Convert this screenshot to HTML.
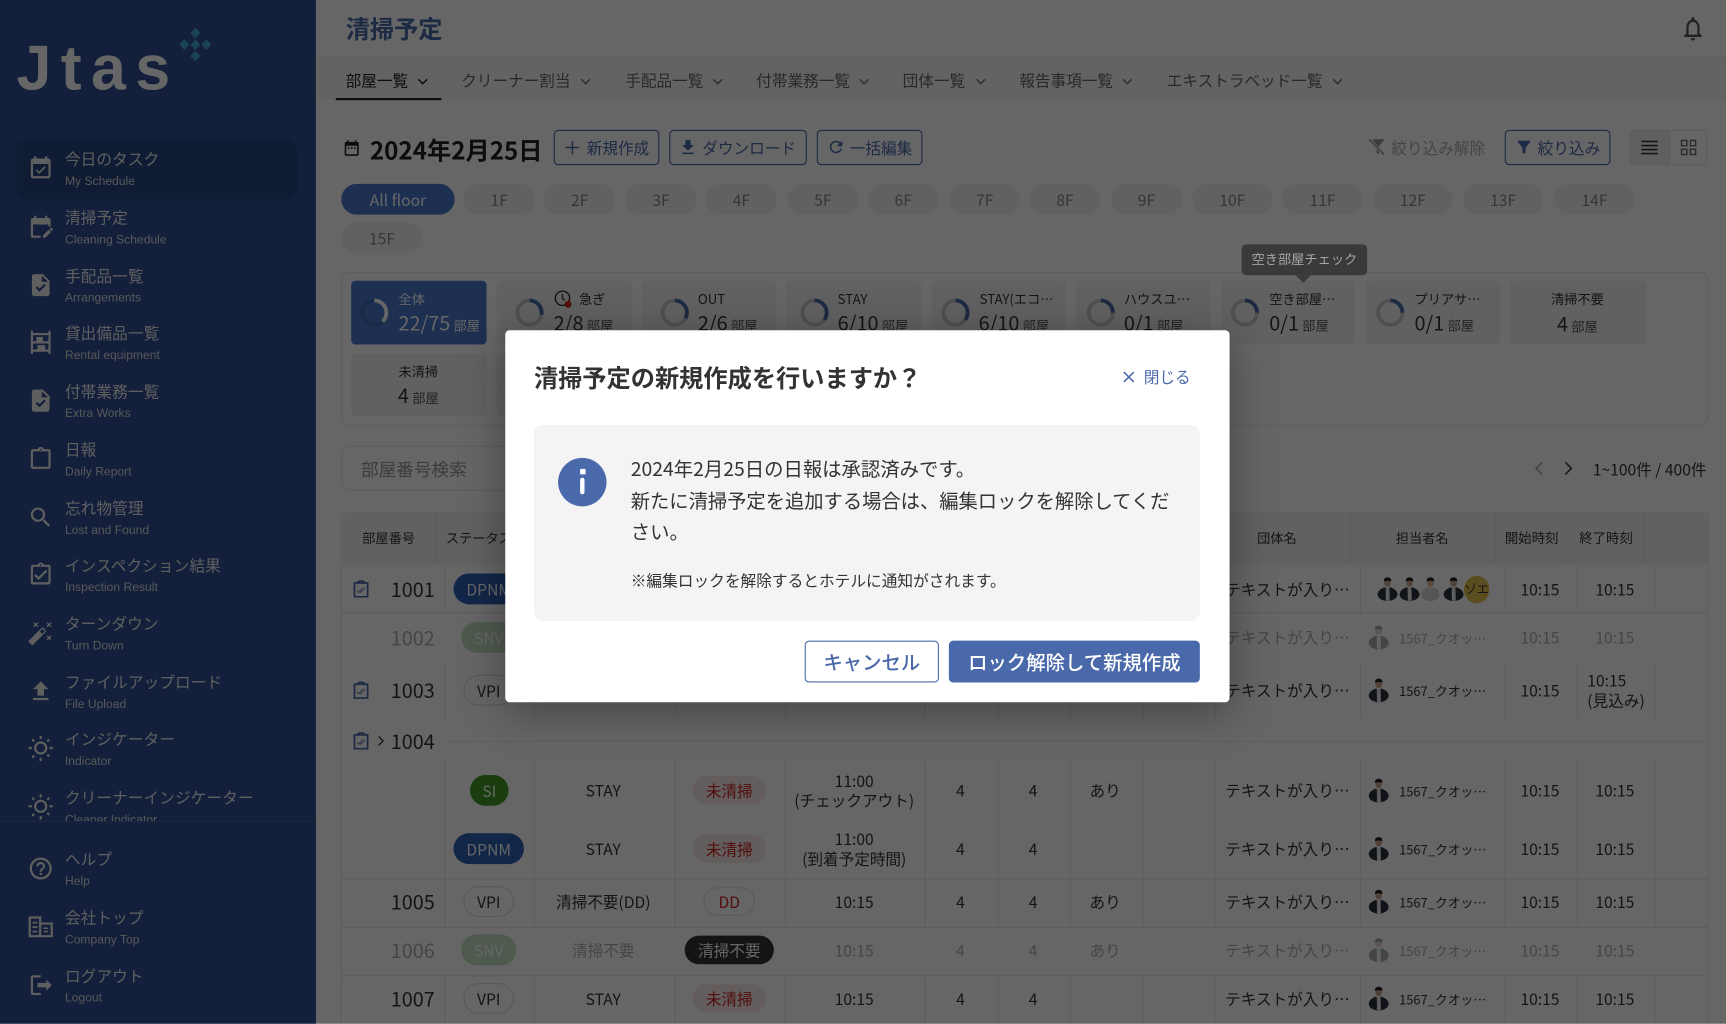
<!DOCTYPE html>
<html lang="ja"><head><meta charset="utf-8"><title>清掃予定</title>
<style>
html,body{margin:0;padding:0;width:1726px;height:1024px;overflow:hidden;background:#fff}
#s{position:absolute;left:0;top:0;width:1568px;height:930.3px;transform:scale(1.10077);transform-origin:0 0;overflow:hidden;background:#fff;font-family:"Noto Sans CJK JP","Liberation Sans",sans-serif;color:#333;font-size:14.2px}
.t{position:absolute;transform:translateY(calc(-50% + 1px));white-space:nowrap;line-height:1.3}
.c{position:absolute;transform:translate(-50%,calc(-50% + 1px));white-space:nowrap;line-height:1.3}
.b{position:absolute;box-sizing:border-box}
svg{position:absolute;display:block;overflow:visible}
.i{fill:currentColor}
#side{position:absolute;left:0;top:0;width:287px;height:930.3px;background:#304e94;color:#eee;overflow:hidden}
.m{position:absolute;left:0;width:287px;height:40px}
.m svg{left:25px;top:6px;width:24px;height:24px}
.m b{position:absolute;left:59px;top:0;font-weight:400;font-size:14.2px;line-height:20px;white-space:nowrap;letter-spacing:.1px}
.m i{position:absolute;left:59px;top:23px;font-style:normal;font-size:11px;line-height:14px;font-family:"Liberation Sans",sans-serif;white-space:nowrap;color:#ddd}
.tab{position:absolute;top:74px;transform:translateY(-50%);font-size:14.2px;line-height:1.3;color:#666;white-space:nowrap}
.ch{width:10px;height:6px;fill:none;stroke:#777;stroke-width:1.4;top:70.5px}
.btn{position:absolute;top:118px;height:32px;box-sizing:border-box;border:1px solid #4a69ab;border-radius:4px;background:#fff;color:#4a69ab}
.pill{position:absolute;height:28px;top:167px;border-radius:14px;background:#f2f2f2;color:#888;text-align:center;line-height:30px;font-size:14.2px;box-sizing:border-box}
.card{position:absolute;height:58px;width:123px;top:255px;border-radius:4px;background:#f3f3f3}
.lab{position:absolute;top:272px;transform:translateY(-50%);font-size:12px;white-space:nowrap;line-height:1.3;color:#333}
.val{position:absolute;top:294px;transform:translateY(-50%);font-size:18px;white-space:nowrap;line-height:1.3;color:#333}
.val small{font-size:12px;margin-left:3px;color:#555}
.ring{width:26px;height:26px;top:271px}
.r{position:absolute;left:0;width:1568px;height:0}
.r>.t,.r>.c{top:0}
.no{position:absolute;left:355px;top:0;transform:translateY(calc(-50% + 1px));font-size:18px;line-height:1.3}
.st{position:absolute;top:-14px;height:28px;border-radius:14px;text-align:center;line-height:30px;font-size:14.2px;box-sizing:border-box}
.dp{left:412px;width:64px;background:#2f5fb5;color:#fff}
.vp{left:421px;width:46px;border:1px solid #ddd;background:#fff;line-height:28px;color:#333}
.sv{left:419px;width:50px;background:#6fb269;color:#fff}
.cl{position:absolute;top:-13px;height:26px;border-radius:13px;text-align:center;line-height:28px;font-size:14.2px;box-sizing:border-box}
.un{left:629px;width:67px;background:#fbe9e9;color:#c8211c}
.gr{position:absolute;left:1113px;top:0;transform:translateY(calc(-50% + 1px));white-space:nowrap;font-size:14.2px;line-height:1.3}
.nm{position:absolute;left:1271px;top:0;transform:translateY(calc(-50% + 1px));white-space:nowrap;font-size:11.7px;line-height:1.3}
.av{left:1243px;top:-12px;width:19px;height:24px}
.ck{left:321px;top:-8px;width:14px;height:16px}
.dis{opacity:.4}
#ov{position:absolute;left:0;top:0;width:1568px;height:931px;background:rgba(0,0,0,.6)}
</style></head><body>
<div id="s">
<svg width="0" height="0" style="position:absolute"><defs>
<symbol id="person" viewBox="0 0 22 26"><ellipse cx="11" cy="6.500" rx="3.400" ry="4.400" fill="#c9a58c"/><path d="M11 .8c-3 0-4.200 2-3.800 4.600 1-1.300 6.600-1.300 7.600 0 .4-2.600-.8-4.600-3.800-4.600z" fill="#1b1b1b"/><path d="M.5 18.500c.5-4 4-6 7.500-7.300l3 1.800 3-1.800c3.500 1.300 7 3.300 7.500 7.300 0 4-4.500 7.200-10.500 7.200S.5 22.500.5 18.500z" fill="#28323f"/><path d="M9 12.200l2 .8 2-.8.3 13.300H9.200z" fill="#e9e9e9"/></symbol>
<symbol id="person2" viewBox="0 0 22 26"><ellipse cx="11" cy="6.500" rx="3.400" ry="4.400" fill="#d6b39a"/><path d="M11 .8c-3 0-4.200 2-3.800 4.600 1-1.300 6.600-1.300 7.600 0 .4-2.600-.8-4.600-3.800-4.600z" fill="#222"/><path d="M1.500 18.500c.5-4 3.500-6 6.500-7.300l3 1 3-1c3 1.300 6 3.300 6.500 7.300 0 4-3.500 7.200-9.500 7.200s-9.500-3.200-9.500-7.200z" fill="#d4d4d4"/></symbol>
<symbol id="clip" viewBox="0 0 16 18"><path d="M1.200 2.800h3.300c.2-1.200 1.700-2 3.500-2s3.300.8 3.500 2h3.300v14.400H1.200z" fill="none" stroke="#4a69ab" stroke-width="1.800"/><path d="M4.500 3.800h7v-1.700h-7z" fill="#4a69ab"/><path d="M3.800 10.500l1.600 2.300 4.500-5.300M7 11.800l1 1 4.200-5.300" fill="none" stroke="#4a69ab" stroke-width=".8"/></symbol>
<path id="vl" d="M404.500 0V1M485.500 0V1M613 0V1M713.500 0V1M840.500 0V1M907 0V1M972 0V1M1038.500 0V1M1104 0V1M1236 0V1M1367 0V1M1433 0V1M1503.500 0V1" fill="none" stroke="#ececec" stroke-width="1" vector-effect="non-scaling-stroke"/>
</defs></svg>

<!-- SIDEBAR -->
<div id="side">
<div class="t" style="left:15px;top:62px;font:700 57px/1 'Liberation Sans',sans-serif;letter-spacing:8.500px;color:#fff">Jtas</div>
<svg style="left:163px;top:25px;width:29px;height:31px" viewBox="0 0 29 31"><g fill="#45a9d6"><path d="M14.500 0l4.500 5-4.500 5-4.500-5zM4.500 10.500l4.500 5-4.500 5-4.500-5zM14.500 10.500l4.500 5-4.500 5-4.500-5zM24.500 10.500l4.500 5-4.500 5-4.500-5zM14.500 21l4.500 5-4.500 5-4.500-5z"/></g></svg>
<div class="b" style="left:15px;top:127px;width:255px;height:54px;border-radius:10px;background:#2a4483"></div>
<div class="m" style="top:135px"><svg viewBox="0 0 24 24" class="i"><path d="M16.530 11.060L15.470 10l-4.880 4.880-2.120-2.120-1.060 1.060L10.590 17l5.940-5.940zM19 3h-1V1h-2v2H8V1H6v2H5c-1.110 0-1.990.9-1.990 2L3 19c0 1.100.89 2 2 2h14c1.100 0 2-.9 2-2V5c0-1.100-.9-2-2-2zm0 16H5V8h14v11z"/></svg><b>今日のタスク</b><i>My Schedule</i></div>
<div class="m" style="top:188px"><svg viewBox="0 0 24 24" class="i"><path d="M5 10h14v2h2V6c0-1.100-.9-2-2-2h-1V2h-2v2H8V2H6v2H5c-1.110 0-1.990.9-1.990 2L3 20c0 1.100.89 2 2 2h7v-2H5V10zm17.840 5.280-.71.71-2.120-2.120.71-.71c.39-.39 1.020-.39 1.410 0l.71.71c.39.39.39 1.020 0 1.410zm-3.540-.7 2.120 2.120-5.300 5.300H14v-2.120l5.300-5.300z"/></svg><b>清掃予定</b><i>Cleaning Schedule</i></div>
<div class="m" style="top:241px"><svg viewBox="0 0 24 24" class="i"><path d="M14 2H6c-1.100 0-1.990.9-1.990 2L4 20c0 1.100.89 2 2 2h12c1.100 0 2-.9 2-2V8l-6-6zm-3.060 16L7.400 14.460l1.410-1.410 2.120 2.120 4.240-4.240 1.410 1.410L10.940 18zM13 9V3.500L18.500 9H13z"/></svg><b>手配品一覧</b><i>Arrangements</i></div>
<div class="m" style="top:293px"><svg viewBox="0 0 24 24" class="i"><path fill-rule="evenodd" d="M3 1.500h2v2h14v-2h2v21h-2v-2H5v2H3zM5 5.500v5.500h14V5.500zM5 13v5.500h14V13zM8 7h6v4H8zM9 14.500h7V18.500H9z"/></svg><b>貸出備品一覧</b><i>Rental equipment</i></div>
<div class="m" style="top:346px"><svg viewBox="0 0 24 24" class="i"><path d="M14 2H6c-1.100 0-1.990.9-1.990 2L4 20c0 1.100.89 2 2 2h12c1.100 0 2-.9 2-2V8l-6-6zm-3.060 16L7.400 14.460l1.410-1.410 2.120 2.120 4.240-4.240 1.410 1.410L10.940 18zM13 9V3.500L18.500 9H13z"/></svg><b>付帯業務一覧</b><i>Extra Works</i></div>
<div class="m" style="top:399px"><svg viewBox="0 0 24 24" class="i"><path d="M19 3h-4.180C14.400 1.840 13.300 1 12 1s-2.400.84-2.820 2H5c-1.100 0-2 .9-2 2v14c0 1.100.9 2 2 2h14c1.100 0 2-.9 2-2V5c0-1.100-.9-2-2-2zm-7-.25c.41 0 .75.34.75.75s-.34.75-.75.75-.75-.34-.75-.75.34-.75.75-.75zM19 19H5V5h14v14z"/></svg><b>日報</b><i>Daily Report</i></div>
<div class="m" style="top:452px"><svg viewBox="0 0 24 24" class="i"><path d="M15.500 14h-.79l-.28-.27C15.410 12.590 16 11.110 16 9.500 16 5.910 13.090 3 9.500 3S3 5.910 3 9.500 5.910 16 9.500 16c1.610 0 3.090-.59 4.230-1.570l.27.28v.79l5 4.990L20.490 19l-4.990-5zm-6 0C7.010 14 5 11.990 5 9.500S7.010 5 9.500 5 14 7.010 14 9.500 11.990 14 9.500 14z"/></svg><b>忘れ物管理</b><i>Lost and Found</i></div>
<div class="m" style="top:504px"><svg viewBox="0 0 24 24" class="i"><path d="M18 9l-1.410-1.420L10 14.170l-2.590-2.580L6 13l4 4zM19 3h-4.180C14.400 1.840 13.300 1 12 1s-2.400.84-2.820 2H5c-1.100 0-2 .9-2 2v14c0 1.100.9 2 2 2h14c1.100 0 2-.9 2-2V5c0-1.100-.9-2-2-2zm-7-.25c.41 0 .75.34.75.75s-.34.75-.75.75-.75-.34-.75-.75.34-.75.75-.75zM19 19H5V5h14v14z"/></svg><b>インスペクション結果</b><i>Inspection Result</i></div>
<div class="m" style="top:557px"><svg viewBox="0 0 24 24" class="i"><path d="M7.500 5.600 10 7 8.600 4.500 10 2 7.500 3.400 5 2l1.400 2.500L5 7zm12 9.800L17 14l1.400 2.500L17 19l2.500-1.400L22 19l-1.400-2.500L22 14zM22 2l-2.500 1.400L17 2l1.400 2.500L17 7l2.500-1.400L22 7l-1.400-2.500zm-7.630 5.290c-.39-.39-1.020-.39-1.410 0L1.290 18.960c-.39.39-.39 1.020 0 1.410l2.340 2.340c.39.39 1.020.39 1.410 0L16.700 11.050c.39-.39.39-1.020 0-1.410l-2.330-2.350zm-1.030 5.490-2.120-2.120 2.440-2.440 2.120 2.120-2.440 2.440z"/></svg><b>ターンダウン</b><i>Turn Down</i></div>
<div class="m" style="top:609.500px"><svg viewBox="0 0 24 24" class="i"><path d="M5 20h14v-2H5v2zm0-10h4v6h6v-6h4l-7-7-7 7z"/></svg><b>ファイルアップロード</b><i>File Upload</i></div>
<div class="m" style="top:662px"><svg viewBox="0 0 24 24" class="i"><path d="M6.760 4.840l-1.800-1.790-1.410 1.410 1.790 1.790 1.420-1.410zM4 10.500H1v2h3v-2zm9-9.950h-2V3.500h2V.55zm7.450 3.910l-1.410-1.410-1.790 1.790 1.410 1.410 1.790-1.790zm-3.210 13.700l1.790 1.800 1.410-1.410-1.800-1.790-1.400 1.400zM20 10.500v2h3v-2h-3zm-8-5c-3.310 0-6 2.690-6 6s2.690 6 6 6 6-2.690 6-6-2.690-6-6-6zm0 10c-2.210 0-4-1.790-4-4s1.790-4 4-4 4 1.790 4 4-1.790 4-4 4zm-1 4.950h2V23.500h-2v-3.050zm-7.450-.96l1.410 1.410 1.790-1.800-1.410-1.410-1.790 1.800z"/></svg><b>インジケーター</b><i>Indicator</i></div>
<div class="m" style="top:715px"><svg viewBox="0 0 24 24" class="i"><path d="M6.760 4.840l-1.800-1.790-1.410 1.410 1.790 1.790 1.420-1.410zM4 10.500H1v2h3v-2zm9-9.950h-2V3.500h2V.55zm7.450 3.910l-1.410-1.410-1.790 1.790 1.410 1.410 1.790-1.790zm-3.210 13.700l1.790 1.800 1.410-1.410-1.800-1.790-1.400 1.400zM20 10.500v2h3v-2h-3zm-8-5c-3.310 0-6 2.690-6 6s2.690 6 6 6 6-2.690 6-6-2.690-6-6-6zm0 10c-2.210 0-4-1.790-4-4s1.790-4 4-4 4 1.790 4 4-1.790 4-4 4zm-1 4.950h2V23.500h-2v-3.050zm-7.450-.96l1.410 1.410 1.790-1.800-1.410-1.410-1.790 1.800z"/></svg><b>クリーナーインジケーター</b><i>Cleaner Indicator</i></div>
<div class="b" style="left:0;top:746px;width:287px;height:185px;background:#304e94;border-top:1px solid #45639f"></div>
<div class="m" style="top:771px"><svg viewBox="0 0 24 24" class="i"><path d="M11 18h2v-2h-2v2zm1-16C6.480 2 2 6.480 2 12s4.480 10 10 10 10-4.480 10-10S17.520 2 12 2zm0 18c-4.410 0-8-3.590-8-8s3.590-8 8-8 8 3.590 8 8-3.590 8-8 8zm0-14c-2.210 0-4 1.790-4 4h2c0-1.100.9-2 2-2s2 .9 2 2c0 2-3 1.750-3 5h2c0-2.250 3-2.500 3-5 0-2.210-1.790-4-4-4z"/></svg><b>ヘルプ</b><i>Help</i></div>
<div class="m" style="top:824px"><svg viewBox="0 0 24 24" class="i"><path fill-rule="evenodd" d="M1 2.500h11.500v19H1zM3 4.500v15h7.500v-15zM12.500 8H23v13.500H12.500v-2H21V10h-8.500zM4.500 7.500h4.500V9H4.500zM4.500 11.500h4.500V13H4.500zM4.500 15.500h4.500V17H4.500zM14.500 12.500h4V14h-4zM14.500 15.500h4V17h-4z"/></svg><b>会社トップ</b><i>Company Top</i></div>
<div class="m" style="top:877px"><svg viewBox="0 0 24 24" class="i"><path d="M5 5h7V3H5c-1.100 0-2 .9-2 2v14c0 1.100.9 2 2 2h7v-2H5V5zm17 7l-5-5v3H9v4h8v3l5-5z"/></svg><b>ログアウト</b><i>Logout</i></div>
</div>

<!-- HEADER -->
<div class="t" style="left:314px;top:25px;font-size:22px;font-weight:700;color:#4a69ab">清掃予定</div>
<svg style="left:1526px;top:13px;width:24px;height:26px;color:#555" viewBox="0 0 24 24" class="i" preserveAspectRatio="none"><path d="M12 22c1.100 0 2-.9 2-2h-4c0 1.100.9 2 2 2zm6-6v-5c0-3.070-1.630-5.640-4.500-6.320V4c0-.83-.67-1.500-1.500-1.500s-1.500.67-1.500 1.500v.68C7.640 5.360 6 7.920 6 11v5l-2 2v1h16v-1l-2-2zm-2 1H8v-6c0-2.480 1.510-4.500 4-4.500s4 2.020 4 4.500v6z"/></svg>
<div class="b" style="left:287px;top:51px;width:1281px;height:40px;background:#f7f7f7;border-top:1px solid #eee"></div>
<div class="b" style="left:305px;top:88.500px;width:96px;height:2.500px;background:#222"></div>
<div class="tab" style="left:314px;color:#222">部屋一覧</div><svg class="ch" style="left:379px;stroke:#222" viewBox="0 0 10 6"><path d="M1 1l4 4 4-4"/></svg>
<div class="tab" style="left:419px">クリーナー割当</div><svg class="ch" style="left:527px" viewBox="0 0 10 6"><path d="M1 1l4 4 4-4"/></svg>
<div class="tab" style="left:568px">手配品一覧</div><svg class="ch" style="left:647px" viewBox="0 0 10 6"><path d="M1 1l4 4 4-4"/></svg>
<div class="tab" style="left:687px">付帯業務一覧</div><svg class="ch" style="left:780px" viewBox="0 0 10 6"><path d="M1 1l4 4 4-4"/></svg>
<div class="tab" style="left:820px">団体一覧</div><svg class="ch" style="left:886px" viewBox="0 0 10 6"><path d="M1 1l4 4 4-4"/></svg>
<div class="tab" style="left:926px">報告事項一覧</div><svg class="ch" style="left:1019px" viewBox="0 0 10 6"><path d="M1 1l4 4 4-4"/></svg>
<div class="tab" style="left:1060px">エキストラベッド一覧</div><svg class="ch" style="left:1210px" viewBox="0 0 10 6"><path d="M1 1l4 4 4-4"/></svg>

<!-- DATE ROW -->
<svg style="left:311px;top:126px;width:17px;height:17px;color:#222" viewBox="0 0 24 24" class="i"><path d="M9 11H7v2h2v-2zm4 0h-2v2h2v-2zm4 0h-2v2h2v-2zm2-7h-1V2h-2v2H8V2H6v2H5c-1.110 0-1.990.9-1.990 2L3 20c0 1.100.89 2 2 2h14c1.100 0 2-.9 2-2V6c0-1.100-.9-2-2-2zm0 16H5V9h14v11z"/></svg>
<div class="t" style="left:336px;top:134.500px;font-size:22px;font-weight:700;color:#222">2024年2月25日</div>
<div class="btn" style="left:503px;width:96px"></div>
<svg style="left:512px;top:126px;width:16px;height:16px;color:#4a69ab" viewBox="0 0 16 16"><path d="M8 2v12M2 8h12" stroke="currentColor" stroke-width="1.400" fill="none"/></svg>
<div class="t" style="left:533px;top:133.500px;color:#4a69ab">新規作成</div>
<div class="btn" style="left:608px;width:125px"></div>
<svg style="left:616px;top:125px;width:18px;height:18px;color:#4a69ab" viewBox="0 0 24 24" class="i"><path d="M5 20h14v-2H5v2zM19 9h-4V3H9v6H5l7 7 7-7z"/></svg>
<div class="t" style="left:638px;top:133.500px;color:#4a69ab">ダウンロード</div>
<div class="btn" style="left:742px;width:96px"></div>
<svg style="left:751px;top:125px;width:17px;height:17px;color:#4a69ab" viewBox="0 0 24 24" class="i"><path d="M17.650 6.350C16.200 4.900 14.210 4 12 4c-4.420 0-7.990 3.580-7.990 8s3.570 8 7.990 8c3.730 0 6.840-2.550 7.730-6h-2.080c-.82 2.330-3.040 4-5.650 4-3.310 0-6-2.690-6-6s2.690-6 6-6c1.660 0 3.140.69 4.220 1.780L13 11h7V4l-2.350 2.350z"/></svg>
<div class="t" style="left:772px;top:133.500px;color:#4a69ab">一括編集</div>
<svg style="left:1243px;top:126px;width:15px;height:15px" viewBox="0 0 15 15"><path d="M3.500.5H15L10 6.500V13.500H7.500V7.500z" fill="#999"/><path d="M.7.500l13.800 14" stroke="#fff" stroke-width="2.600"/><path d="M.7.500l13.800 14" stroke="#999" stroke-width="1.300"/></svg>
<div class="t" style="left:1264px;top:133.500px;color:#aaa">絞り込み解除</div>
<div class="btn" style="left:1367px;width:96px"></div>
<svg style="left:1376px;top:125px;width:17px;height:17px;color:#4a69ab" viewBox="0 0 24 24" class="i"><path d="M4.250 5.610C6.270 8.200 10 13 10 13v6c0 .55.45 1 1 1h2c.55 0 1-.45 1-1v-6s3.720-4.800 5.740-7.390c.51-.66.04-1.610-.79-1.610H5.040c-.83 0-1.300.95-.79 1.610z"/></svg>
<div class="t" style="left:1397px;top:133.500px;color:#4a69ab">絞り込み</div>
<div class="b" style="left:1480px;top:118px;width:71px;height:32px;border:1px solid #e8e8e8;border-radius:4px;background:#fff;overflow:hidden"><div class="b" style="left:0;top:0;width:36px;height:30px;background:#f0f0f0;border-right:1px solid #e4e4e4"></div></div>
<svg style="left:1491px;top:127px;width:15px;height:14px" viewBox="0 0 15 14"><path d="M0 1.500h15M0 5.200h15M0 8.900h15M0 12.500h15" stroke="#333" stroke-width="1.500"/></svg>
<svg style="left:1527px;top:127px;width:14px;height:14px" viewBox="0 0 14 14"><path d="M.6.6h4.800v4.800H.6zM8.600.6h4.800v4.800H8.600zM.6 8.600h4.800v4.800H.6zM8.600 8.600h4.800v4.800H8.600z" fill="none" stroke="#666" stroke-width="1.200"/></svg>

<!-- FLOOR PILLS -->
<div class="pill" style="left:310px;width:103px;background:#4a78cc;color:#fff">All floor</div>
<div class="pill" style="left:421px;width:65px">1F</div><div class="pill" style="left:494px;width:65px">2F</div><div class="pill" style="left:568px;width:65px">3F</div><div class="pill" style="left:641px;width:65px">4F</div><div class="pill" style="left:715px;width:65px">5F</div><div class="pill" style="left:788px;width:65px">6F</div><div class="pill" style="left:862px;width:65px">7F</div><div class="pill" style="left:935px;width:65px">8F</div><div class="pill" style="left:1009px;width:65px">9F</div><div class="pill" style="left:1083px;width:73px">10F</div><div class="pill" style="left:1165px;width:73px">11F</div><div class="pill" style="left:1247px;width:73px">12F</div><div class="pill" style="left:1329px;width:73px">13F</div><div class="pill" style="left:1412px;width:73px">14F</div>
<div class="pill" style="left:310px;top:202px;width:74px">15F</div>

<!-- SUMMARY -->
<div class="b" style="left:310px;top:247px;width:1242px;height:140px;border:1px solid #e8e8e8;border-radius:8px"></div>
<div class="card" style="left:319px;background:#4a78cc"></div>
<svg class="ring" style="left:327px" viewBox="0 0 26 26"><circle cx="13" cy="13" r="11" fill="none" stroke="#3f69b5" stroke-width="3.500"/><circle cx="13" cy="13" r="11" fill="none" stroke="#fff" stroke-width="3.500" pathLength="100" stroke-dasharray="38 100" transform="rotate(-90 13 13)"/></svg>
<div class="lab" style="left:362px;color:#fff">全体</div><div class="val" style="left:362px;color:#fff">22/75<small style="color:#fff">部屋</small></div>
<div class="card" style="left:451px"></div>
<svg class="ring" style="left:468px" viewBox="0 0 26 26"><circle cx="13" cy="13" r="11" fill="none" stroke="#c8c8c8" stroke-width="3.500"/><circle cx="13" cy="13" r="11" fill="none" stroke="#4a69ab" stroke-width="3.500" pathLength="100" stroke-dasharray="28 100" transform="rotate(-90 13 13)"/></svg>
<svg style="left:503px;top:263px;width:18px;height:18px" viewBox="0 0 18 18"><circle cx="8" cy="8" r="6.500" fill="none" stroke="#333" stroke-width="1.300"/><path d="M8 4v4l2 2" fill="none" stroke="#333" stroke-width="1.200"/><path d="M13 8.500c.5 1.500 3.200 2.500 3.200 5a3.200 3.200 0 0 1-6.400 0c0-1.500 1-2 1.500-3 .4.500.6.800 1 .9.500-.7.600-1.800.7-2.900z" fill="#d12b20"/></svg>
<div class="lab" style="left:526px">急ぎ</div><div class="val" style="left:503px">2/8<small>部屋</small></div>
<div class="card" style="left:583px;width:122px"></div>
<svg class="ring" style="left:600px" viewBox="0 0 26 26"><circle cx="13" cy="13" r="11" fill="none" stroke="#c8c8c8" stroke-width="3.500"/><circle cx="13" cy="13" r="11" fill="none" stroke="#4a69ab" stroke-width="3.500" pathLength="100" stroke-dasharray="33 100" transform="rotate(-90 13 13)"/></svg>
<div class="lab" style="left:634px">OUT</div><div class="val" style="left:634px">2/6<small>部屋</small></div>
<div class="card" style="left:714px"></div>
<svg class="ring" style="left:726.500px" viewBox="0 0 26 26"><circle cx="13" cy="13" r="11" fill="none" stroke="#c8c8c8" stroke-width="3.500"/><circle cx="13" cy="13" r="11" fill="none" stroke="#4a69ab" stroke-width="3.500" pathLength="100" stroke-dasharray="35 100" transform="rotate(-90 13 13)"/></svg>
<div class="lab" style="left:761px">STAY</div><div class="val" style="left:761px">6/10<small>部屋</small></div>
<div class="card" style="left:846px;width:122px"></div>
<svg class="ring" style="left:855px" viewBox="0 0 26 26"><circle cx="13" cy="13" r="11" fill="none" stroke="#c8c8c8" stroke-width="3.500"/><circle cx="13" cy="13" r="11" fill="none" stroke="#4a69ab" stroke-width="3.500" pathLength="100" stroke-dasharray="35 100" transform="rotate(-90 13 13)"/></svg>
<div class="lab" style="left:890px">STAY(エコ…</div><div class="val" style="left:889px">6/10<small>部屋</small></div>
<div class="card" style="left:977px"></div>
<svg class="ring" style="left:986.500px" viewBox="0 0 26 26"><circle cx="13" cy="13" r="11" fill="none" stroke="#c8c8c8" stroke-width="3.500"/><circle cx="13" cy="13" r="11" fill="none" stroke="#4a69ab" stroke-width="3.500" pathLength="100" stroke-dasharray="25 100" transform="rotate(-90 13 13)"/></svg>
<div class="lab" style="left:1021px">ハウスユ…</div><div class="val" style="left:1021px">0/1<small>部屋</small></div>
<div class="card" style="left:1109px;width:122px"></div>
<svg class="ring" style="left:1118px" viewBox="0 0 26 26"><circle cx="13" cy="13" r="11" fill="none" stroke="#c8c8c8" stroke-width="3.500"/><circle cx="13" cy="13" r="11" fill="none" stroke="#4a69ab" stroke-width="3.500" pathLength="100" stroke-dasharray="25 100" transform="rotate(-90 13 13)"/></svg>
<div class="lab" style="left:1153px">空き部屋…</div><div class="val" style="left:1153px">0/1<small>部屋</small></div>
<div class="card" style="left:1241px;width:122px"></div>
<svg class="ring" style="left:1250px" viewBox="0 0 26 26"><circle cx="13" cy="13" r="11" fill="none" stroke="#c8c8c8" stroke-width="3.500"/><circle cx="13" cy="13" r="11" fill="none" stroke="#4a69ab" stroke-width="3.500" pathLength="100" stroke-dasharray="25 100" transform="rotate(-90 13 13)"/></svg>
<div class="lab" style="left:1285px">プリアサ…</div><div class="val" style="left:1285px">0/1<small>部屋</small></div>
<div class="card" style="left:1372px"></div>
<div class="c" style="left:1433px;top:271px;font-size:12px">清掃不要</div><div class="c" style="left:1433px;top:293.500px;font-size:18px">4<small style="font-size:12px;margin-left:3px;color:#555">部屋</small></div>
<div class="card" style="left:319px;top:321px;height:57px"></div>
<div class="c" style="left:380px;top:337px;font-size:12px">未清掃</div><div class="c" style="left:380px;top:358.500px;font-size:18px">4<small style="font-size:12px;margin-left:3px;color:#555">部屋</small></div>
<div class="card" style="left:451px;top:321px;height:57px"></div>

<!-- SEARCH -->
<div class="b" style="left:310px;top:405px;width:300px;height:41px;border:1px solid #e8e8e8;border-radius:8px"></div>
<div class="t" style="left:328px;top:424.500px;font-size:16px;color:#999">部屋番号検索</div>
<svg style="left:1393px;top:419px;width:10px;height:13px" viewBox="0 0 10 13"><path d="M8 1L2.500 6.500 8 12" fill="none" stroke="#aaa" stroke-width="1.500"/></svg>
<svg style="left:1420px;top:419px;width:10px;height:13px" viewBox="0 0 10 13"><path d="M2 1l5.500 5.500L2 12" fill="none" stroke="#444" stroke-width="1.500"/></svg>
<div class="t" style="left:1447px;top:425.500px">1~100件 / 400件</div>

<!-- TABLE -->
<div class="b" style="left:310px;top:465px;width:1242px;height:48px;background:#f2f2f2;border-radius:8px 8px 0 0"></div>
<div class="b" style="left:395px;top:465px;width:1px;height:48px;background:#e6e6e6"></div>
<div class="b" style="left:1226px;top:465px;width:1px;height:48px;background:#e6e6e6"></div>
<div class="b" style="left:1358px;top:465px;width:1px;height:48px;background:#e6e6e6"></div>
<div class="b" style="left:1424px;top:465px;width:1px;height:48px;background:#e6e6e6"></div>
<div class="b" style="left:1494px;top:465px;width:1px;height:48px;background:#e6e6e6"></div>
<div class="c" style="left:353px;top:488px;font-size:12px">部屋番号</div>
<div class="t" style="left:405px;top:488px;font-size:12px">ステータス</div>
<div class="c" style="left:1160px;top:488px;font-size:12px">団体名</div>
<div class="c" style="left:1292px;top:488px;font-size:12px">担当者名</div>
<div class="c" style="left:1391.500px;top:488px;font-size:12.200px">開始時刻</div>
<div class="c" style="left:1459px;top:488px;font-size:12.200px">終了時刻</div>

<svg style="left:0;top:0;width:1568px;height:931px" viewBox="0 0 1568 931">
<use href="#vl" transform="translate(0,513) scale(1,43)"/>
<use href="#vl" transform="translate(0,601) scale(1,52)"/>
<use href="#vl" transform="translate(0,691) scale(1,107)"/>
<use href="#vl" transform="translate(0,798) scale(1,44)"/>
<use href="#vl" transform="translate(0,886) scale(1,44)"/>
<path d="M310 465V931M1551.500 465V931" stroke="#ececec" fill="none"/>
<path d="M310 556.500H1552M404 673.500H1552M310 798.500H1552M310 842.500H1552M310 886.500H1552" stroke="#e6e6e6" fill="none"/>
</svg>

<!-- ROW 1001 -->
<div class="r" style="top:535px"><svg class="ck" viewBox="0 0 16 18"><use href="#clip"/></svg><div class="no">1001</div><div class="st dp">DPNM</div>
<div class="gr">テキストが入り…</div>
<svg class="av" style="left:1251px" viewBox="0 0 22 26"><use href="#person"/></svg><svg class="av" style="left:1271px" viewBox="0 0 22 26"><use href="#person"/></svg><svg class="av" style="left:1290px" viewBox="0 0 22 26"><use href="#person2"/></svg><svg class="av" style="left:1311px" viewBox="0 0 22 26"><use href="#person"/></svg>
<div class="b" style="left:1330px;top:-12px;width:23px;height:25px;border-radius:50%;background:#e2c04e;overflow:hidden;font-size:11px;line-height:25px;text-align:center;white-space:nowrap">ゾエ</div>
<div class="c" style="left:1399px">10:15</div><div class="c" style="left:1467px">10:15</div></div>
<!-- ROW 1002 -->
<div class="r dis" style="top:579px"><div class="no">1002</div><div class="st sv">SNV</div><div class="gr">テキストが入り…</div><svg class="av" viewBox="0 0 22 26"><use href="#person"/></svg><div class="nm">1567_クオッ…</div><div class="c" style="left:1399px">10:15</div><div class="c" style="left:1467px">10:15</div></div>
<!-- ROW 1003 -->
<div class="r" style="top:627px"><svg class="ck" viewBox="0 0 16 18"><use href="#clip"/></svg><div class="no">1003</div><div class="st vp">VPI</div><div class="gr">テキストが入り…</div><svg class="av" viewBox="0 0 22 26"><use href="#person"/></svg><div class="nm">1567_クオッ…</div><div class="c" style="left:1399px">10:15</div><div class="t" style="left:1442px;top:-9px">10:15</div><div class="t" style="left:1442px;top:9px">(見込み)</div></div>
<!-- ROW 1004 -->
<div class="r" style="top:673px"><svg class="ck" viewBox="0 0 16 18"><use href="#clip"/></svg><svg style="left:343px;top:-5px;width:6px;height:10px" viewBox="0 0 6 10"><path d="M1 1l4 4-4 4" fill="none" stroke="#333" stroke-width="1.200"/></svg><div class="no">1004</div></div>
<div class="r" style="top:718px"><div class="st" style="left:427px;width:35px;background:#3f9a23;color:#fff">SI</div><div class="c" style="left:548px">STAY</div><div class="cl un">未清掃</div><div class="c" style="left:776px;top:-9px">11:00</div><div class="c" style="left:776px;top:9px">(チェックアウト)</div><div class="c" style="left:872.500px">4</div><div class="c" style="left:938.500px">4</div><div class="c" style="left:1004px">あり</div><div class="gr">テキストが入り…</div><svg class="av" viewBox="0 0 22 26"><use href="#person"/></svg><div class="nm">1567_クオッ…</div><div class="c" style="left:1399px">10:15</div><div class="c" style="left:1467px">10:15</div></div>
<div class="r" style="top:771px"><div class="st dp">DPNM</div><div class="c" style="left:548px">STAY</div><div class="cl un">未清掃</div><div class="c" style="left:776px;top:-9px">11:00</div><div class="c" style="left:776px;top:9px">(到着予定時間)</div><div class="c" style="left:872.500px">4</div><div class="c" style="left:938.500px">4</div><div class="gr">テキストが入り…</div><svg class="av" viewBox="0 0 22 26"><use href="#person"/></svg><div class="nm">1567_クオッ…</div><div class="c" style="left:1399px">10:15</div><div class="c" style="left:1467px">10:15</div></div>
<!-- ROW 1005 -->
<div class="r" style="top:819px"><div class="no">1005</div><div class="st vp">VPI</div><div class="c" style="left:548px">清掃不要(DD)</div><div class="cl" style="left:639px;width:47px;border:1px solid #e2e2e2;line-height:26px;color:#c8211c">DD</div><div class="c" style="left:776px">10:15</div><div class="c" style="left:872.500px">4</div><div class="c" style="left:938.500px">4</div><div class="c" style="left:1004px">あり</div><div class="gr">テキストが入り…</div><svg class="av" viewBox="0 0 22 26"><use href="#person"/></svg><div class="nm">1567_クオッ…</div><div class="c" style="left:1399px">10:15</div><div class="c" style="left:1467px">10:15</div></div>
<!-- ROW 1006 -->
<div class="r dis" style="top:863px"><div class="no">1006</div><div class="st sv">SNV</div><div class="c" style="left:548px">清掃不要</div><div class="c" style="left:776px">10:15</div><div class="c" style="left:872.500px">4</div><div class="c" style="left:938.500px">4</div><div class="c" style="left:1004px">あり</div><div class="gr">テキストが入り…</div><svg class="av" viewBox="0 0 22 26"><use href="#person"/></svg><div class="nm">1567_クオッ…</div><div class="c" style="left:1399px">10:15</div><div class="c" style="left:1467px">10:15</div></div>
<div class="r" style="top:863px"><div class="cl" style="left:622px;width:81px;background:#333;color:#fff">清掃不要</div></div>
<!-- ROW 1007 -->
<div class="r" style="top:907px"><div class="no">1007</div><div class="st vp">VPI</div><div class="c" style="left:548px">STAY</div><div class="cl un">未清掃</div><div class="c" style="left:776px">10:15</div><div class="c" style="left:872.500px">4</div><div class="c" style="left:938.500px">4</div><div class="gr">テキストが入り…</div><svg class="av" viewBox="0 0 22 26"><use href="#person"/></svg><div class="nm">1567_クオッ…</div><div class="c" style="left:1399px">10:15</div><div class="c" style="left:1467px">10:15</div></div>

<!-- OVERLAY -->
<div id="ov"></div>

<!-- TOOLTIP -->
<div class="b" style="left:1128px;top:222px;width:114px;height:28px;background:#3a3a3a;border-radius:4px;color:#a6a6a6;font-size:12px;line-height:28px;text-align:center">空き部屋チェック</div>
<svg style="left:1177px;top:250px;width:14px;height:7px" viewBox="0 0 14 7"><path d="M0 0h14L7 7z" fill="#3a3a3a"/></svg>

<!-- MODAL -->
<div class="b" style="left:459px;top:300px;width:658px;height:338px;background:#fff;border-radius:4px;box-shadow:0 8px 40px rgba(0,0,0,.35)"></div>
<div class="t" style="left:485px;top:342px;font-size:22px;font-weight:700;color:#333">清掃予定の新規作成を行いますか？</div>
<svg style="left:1020px;top:337px;width:11px;height:11px" viewBox="0 0 11 11"><path d="M1 1l9 9M10 1l-9 9" stroke="#4a69ab" stroke-width="1.400" fill="none"/></svg>
<div class="t" style="left:1039px;top:342px;color:#4a69ab">閉じる</div>
<div class="b" style="left:485px;top:386px;width:605px;height:178px;background:#f4f4f4;border-radius:8px"></div>
<div class="b" style="left:507px;top:416px;width:44px;height:44px;border-radius:50%;background:#4a69ab"></div>
<div class="b" style="left:526.500px;top:426px;width:5px;height:5px;border-radius:1px;background:#fff"></div>
<div class="b" style="left:527px;top:434px;width:4px;height:15px;border-radius:2px;background:#fff"></div>
<div class="t" style="left:573px;top:426px;font-size:17.600px;color:#333">2024年2月25日の日報は承認済みです。</div>
<div class="t" style="left:573px;top:454.500px;font-size:17.530px;color:#333">新たに清掃予定を追加する場合は、編集ロックを解除してくだ</div>
<div class="t" style="left:573px;top:482.500px;font-size:17.600px;color:#333">さい。</div>
<div class="t" style="left:573px;top:527px;font-size:14.250px;color:#333">※編集ロックを解除するとホテルに通知がされます。</div>
<div class="b" style="left:731px;top:582px;width:122px;height:38px;border:1px solid #4a69ab;border-radius:4px;background:#fff;color:#4a69ab;font-size:17.600px;line-height:38px;text-align:center;font-weight:500">キャンセル</div>
<div class="b" style="left:862px;top:582px;width:228px;height:38px;border-radius:4px;background:#4a69ab;color:#fff;font-size:17.600px;line-height:40px;text-align:center;font-weight:500">ロック解除して新規作成</div>
</div>
</body></html>
